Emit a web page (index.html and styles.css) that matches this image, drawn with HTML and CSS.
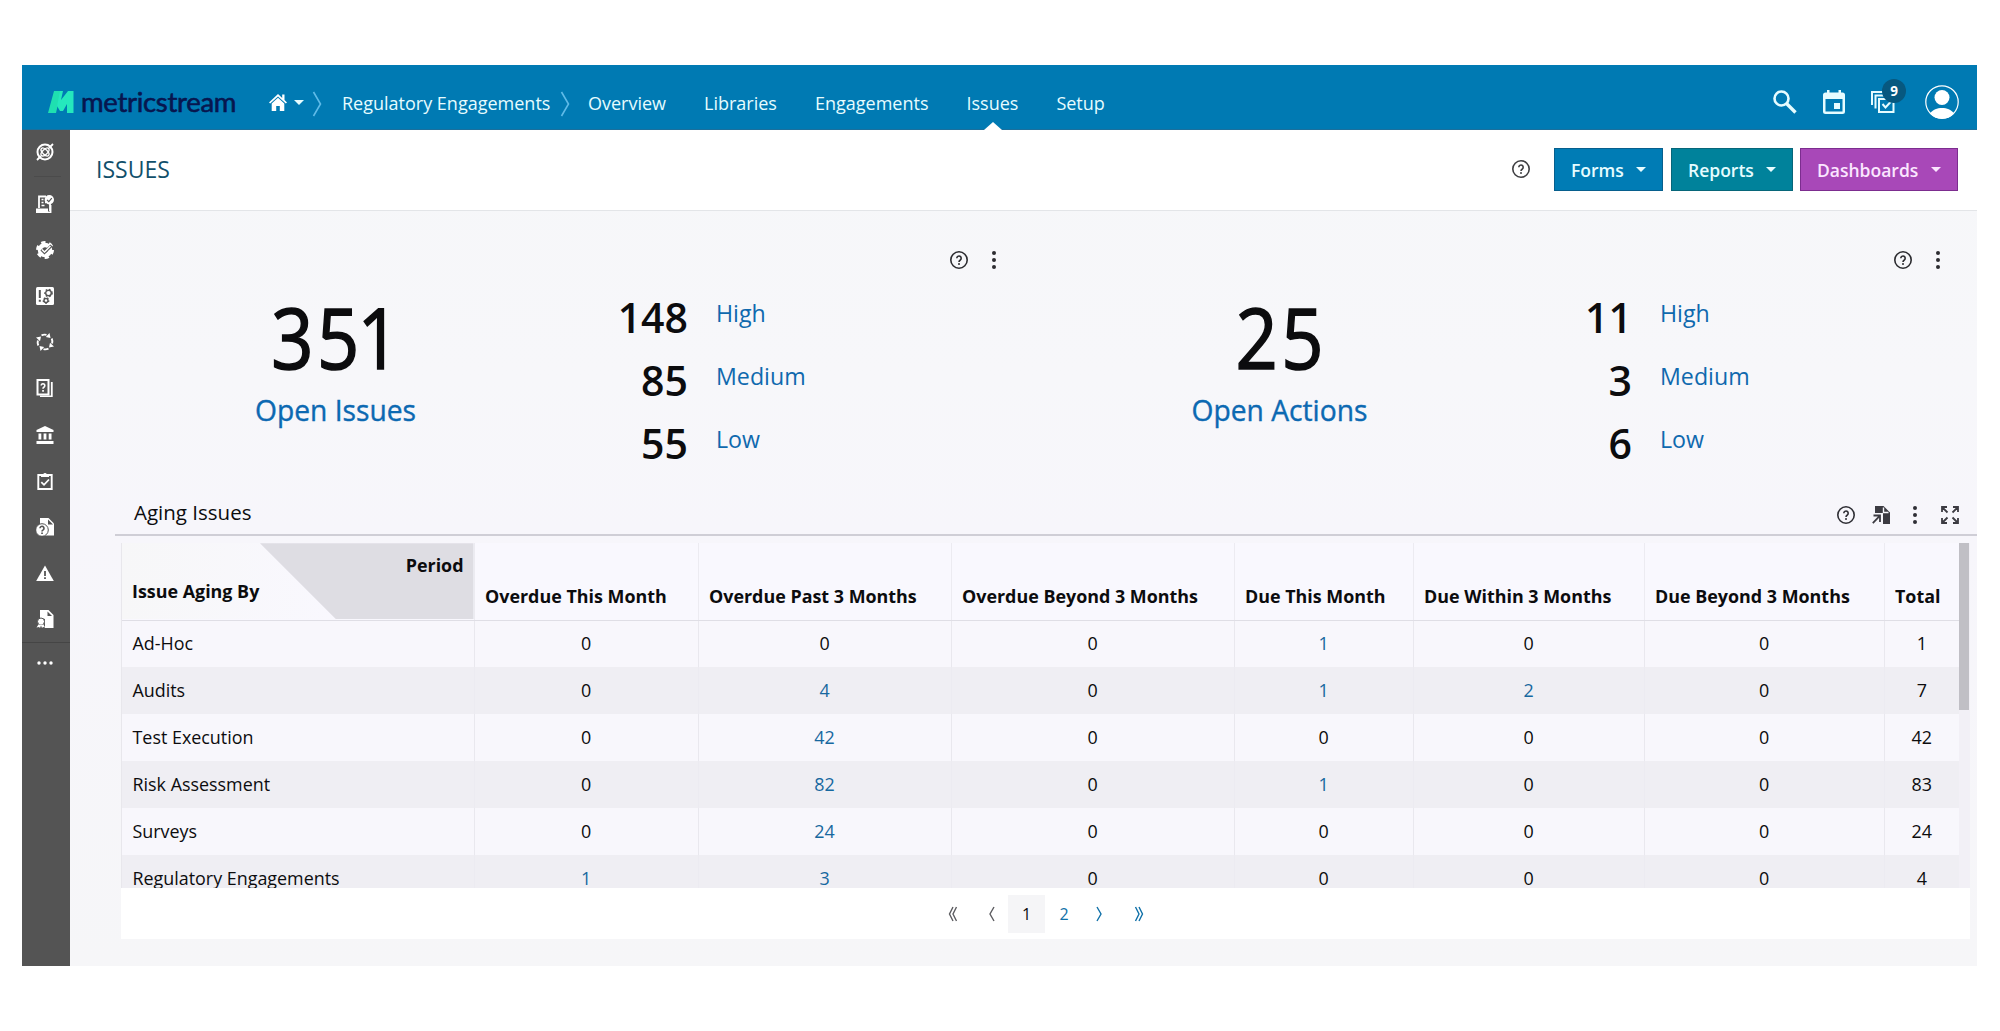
FILE: index.html
```html
<!DOCTYPE html>
<html lang="en">
<head>
  <meta charset="UTF-8">
  <meta name="viewport" content="width=device-width, initial-scale=1.0">
  <title>MetricStream - Issues</title>
  <link rel="stylesheet" href="styles.css">
</head>
<body>
  <!-- shared icons -->
  <svg class="sprite" width="0" height="0">
    <symbol id="help" viewBox="0 0 20 20">
      <circle cx="10" cy="10" r="8.2" fill="none" stroke="currentColor" stroke-width="1.6"/>
      <path d="M7.8 8.2a2.2 2.2 0 1 1 3.5 1.8c-.9.6-1.3 1-1.3 2" fill="none" stroke="currentColor" stroke-width="1.6"/>
      <circle cx="10" cy="14" r="1" fill="currentColor"/>
    </symbol>
    <symbol id="dots" viewBox="0 0 6 20">
      <circle cx="3" cy="3" r="2" fill="currentColor"/>
      <circle cx="3" cy="10" r="2" fill="currentColor"/>
      <circle cx="3" cy="17" r="2" fill="currentColor"/>
    </symbol>
    <symbol id="turn" viewBox="0 0 18 18">
      <path d="M5.5 2.300Q8 1.200 10.500 1.900" fill="none" stroke="#fff" stroke-width="1.900"/>
      <path d="M14.500 5L13.500 0 9.800 4z" fill="#fff"/>
    </symbol>
  </svg>

  <div class="app">
    <header class="topbar">
      <div class="logo">
        <svg width="26" height="22" viewBox="0 0 26 22">
          <path d="M6 0h7l-5 22H0z" fill="#1fe0b0"/>
          <path d="M12 0h3l-2 9 7-9h5.500v22h-6.500v-9l-4 7h-3l-3-5z" fill="#25e8bd"/>
        </svg>
        <span>metricstream</span>
      </div>
      <a class="home">
        <svg width="18" height="18" viewBox="0 0 18 18" fill="#fff"><path d="M9 1L0 9.400l1.200 1.200L9 3.500l7.800 7.100L18 9.400l-2.500-2.300V1.500h-2.300v3.400z"/><path d="M9 4.800l-6.300 5.700V18h4.500v-5h3.600v5h4.500v-7.500z"/></svg>
        <i class="caret"></i>
      </a>
      <svg class="sep" width="10" height="26" viewBox="0 0 10 26"><path d="M1.500 1l7 12-7 12" fill="none" stroke="#5fbbe8" stroke-width="1.600"/></svg>
      <a class="crumb">Regulatory Engagements</a>
      <svg class="sep" width="10" height="26" viewBox="0 0 10 26"><path d="M1.500 1l7 12-7 12" fill="none" stroke="#5fbbe8" stroke-width="1.600"/></svg>
      <nav class="menu">
        <a>Overview</a>
        <a>Libraries</a>
        <a>Engagements</a>
        <a class="active">Issues</a>
        <a>Setup</a>
      </nav>
      <div class="tools">
        <svg width="24" height="24" viewBox="0 0 24 24" fill="none" stroke="#e6fcff"><circle cx="8.500" cy="8.500" r="7" stroke-width="2.600"/><path d="M13.500 13.500l9 9" stroke-width="3.400"/></svg>
        <svg width="22" height="24" viewBox="0 0 22 24"><path fill="#e6fcff" fill-rule="evenodd" d="M4 0h2.500v2.500h9V0H18v2.500h1.500A2.500 2.500 0 0 1 22 5v16.500a2.500 2.500 0 0 1-2.500 2.500h-17A2.500 2.500 0 0 1 0 21.500V5a2.500 2.500 0 0 1 2.500-2.500H4zM2.500 9v12.500h17V9z"/><path fill="#e6fcff" d="M11 13h6v6h-6z"/></svg>
        <div class="tasks">
          <svg width="24" height="22" viewBox="0 0 24 22" fill="none" stroke="#e6fcff" stroke-width="2"><path d="M1 14V1h14M4.500 17.500V4.500H18"/><path d="M8 21V8h14.500v13z"/><path d="M11.500 13l3 3.500 5.500-6"/></svg>
          <b class="badge">9</b>
        </div>
        <svg width="34" height="34" viewBox="0 0 34 34"><circle cx="17" cy="17" r="16.200" fill="none" stroke="#fff" stroke-width="1.200"/><circle cx="17" cy="12.500" r="7.500" fill="#fff"/><path d="M5 28.500c3-4 7-5.500 12-5.500s9 1.500 12 5.500A17 17 0 0 1 17 34 17 17 0 0 1 5 28.500z" fill="#fff"/></svg>
      </div>
    </header>

    <div class="body">
      <aside class="sidebar">
        <a class="first"><svg viewBox="0 0 18 18" fill="none" stroke="#fff"><circle cx="9" cy="9" r="7.500" stroke-width="2"/><ellipse cx="9" cy="9" rx="5" ry="2.500" transform="rotate(45 9 9)" stroke-width="1.300"/><ellipse cx="9" cy="9" rx="5" ry="2.500" transform="rotate(-45 9 9)" stroke-width="1.300"/><path d="M1 17l4-4M13 5l4-4" stroke-width="1.800"/></svg></a>
        <a><svg viewBox="0 0 18 18"><path d="M3 13V1.500h7M14 9v7" fill="none" stroke="#fff" stroke-width="1.800"/><path d="M0 13.500h12V18H0z" fill="#fff"/><path d="M5.500 4.500h2M5.500 7.500h2M5.500 10.500h3M9 7.500h1" stroke="#fff" stroke-width="1.500"/><path d="M11.500 17.200h3.200V10" stroke="#fff" stroke-width="1.500" fill="none"/><circle cx="13.300" cy="4.700" r="4.700" fill="#fff"/><path d="M11 4.800l1.800 1.800 3-3.400" fill="none" stroke="#545454" stroke-width="1.200"/></svg></a>
        <a><svg viewBox="0 0 18 18"><circle cx="9" cy="9" r="5" fill="none" stroke="#fff" stroke-width="4.500"/><circle cx="9" cy="9" r="7.600" fill="none" stroke="#fff" stroke-width="2.800" stroke-dasharray="4.200 3.760"/><path d="M5.500 8.500l3 3 7-7" fill="none" stroke="#545454" stroke-width="3"/><path d="M6 8.500l2.500 2.500 6-6" fill="none" stroke="#fff" stroke-width="1.500"/></svg></a>
        <a><svg viewBox="0 0 18 18"><rect width="18" height="18" rx="1.500" fill="#fff"/><path d="M2.800 3h2v8h-2zM2.800 12.800h2v2h-2z" fill="#545454"/><g fill="none" stroke="#545454" stroke-width="1.400"><circle cx="12.500" cy="6" r="2.800"/><circle cx="10" cy="13.500" r="2"/></g><g fill="none" stroke="#545454" stroke-width="1.300" stroke-dasharray="1.500 2"><circle cx="12.500" cy="6" r="3.700"/><circle cx="10" cy="13.500" r="2.800"/></g></svg></a>
        <a><svg viewBox="0 0 18 18"><use href="#turn"/><use href="#turn" transform="rotate(90 9 9)"/><use href="#turn" transform="rotate(180 9 9)"/><use href="#turn" transform="rotate(270 9 9)"/></svg></a>
        <a><svg viewBox="0 0 18 18"><path d="M1.500 1h11v14.500h-11z" fill="none" stroke="#fff" stroke-width="2"/><path d="M15.800 3v14.500H4" fill="none" stroke="#fff" stroke-width="1.800"/><path d="M5.200 6.500a1.800 1.800 0 1 1 2.900 1.500c-.8.500-1.100.9-1.100 1.700" fill="none" stroke="#fff" stroke-width="1.600"/><path d="M6.200 11h1.700v1.700H6.200z" fill="#fff"/></svg></a>
        <a><svg viewBox="0 0 18 18" fill="#fff"><path d="M9 0l8.500 4v2H.5V4zM2.500 7.500h2.800v6H2.500zM7.600 7.500h2.800v6H7.600zM12.700 7.500h2.800v6h-2.800zM.5 15h17v3H.5z"/></svg></a>
        <a><svg viewBox="0 0 18 18"><path d="M2.300 3h13.400v14H2.300z" fill="none" stroke="#fff" stroke-width="1.900"/><path d="M5 2.200h2.200a1.900 1.900 0 0 1 3.600 0H13V5H5z" fill="#fff"/><path d="M5.300 10.200l2.700 2.600 5-5.300" fill="none" stroke="#fff" stroke-width="1.800"/></svg></a>
        <a><svg viewBox="0 0 18 18"><path d="M4 0h8.500L18 5.500V17.500H4z" fill="#fff"/><path d="M12 1.500v5h5z" fill="#545454"/><circle cx="6" cy="12" r="6.300" fill="#fff" stroke="#545454" stroke-width="1"/><path d="M4 10.300a2 2 0 1 1 3.200 1.600c-.8.500-1.200.8-1.200 1.600" fill="none" stroke="#545454" stroke-width="1.600"/><path d="M5.200 14.400h1.700V16H5.200z" fill="#545454"/></svg></a>
        <a><svg viewBox="0 0 18 18"><path d="M9 1.500l8.800 15.500H.2z" fill="#fff"/><path d="M8.100 7h1.800v5H8.100zM8.100 13.200h1.800V15H8.100z" fill="#545454"/></svg></a>
        <a><svg viewBox="0 0 18 18"><path d="M4 0h8.500L17.500 5V18H9V9L4 8z" fill="#fff"/><path d="M11.500 1.500V6H16z" fill="#545454"/><circle cx="5" cy="11.500" r="3.500" fill="#fff" stroke="#545454" stroke-width="1"/><path d="M2.500 14.500L.5 17.500l2.500-.5 1 1 1-2.500 1 2.500 1-1 2 .5-1.500-3z" fill="#fff"/></svg></a>
        <a class="more"><svg viewBox="0 0 18 18" fill="#fff"><circle cx="3" cy="9" r="1.700"/><circle cx="9" cy="9" r="1.700"/><circle cx="15" cy="9" r="1.700"/></svg></a>
      </aside>

      <main class="main">
        <div class="pagebar">
          <h1>ISSUES</h1>
          <svg class="help" width="20" height="20"><use href="#help"/></svg>
          <button class="btn forms">Forms<i class="caret"></i></button>
          <button class="btn reports">Reports<i class="caret"></i></button>
          <button class="btn dashboards">Dashboards<i class="caret"></i></button>
        </div>

        <div class="stats">
          <section class="stat">
            <div class="stat-total">
              <div class="big">3<span class="tight">5</span>1</div>
              <a>Open Issues</a>
            </div>
            <dl class="levels">
              <dt>148</dt><dd>High</dd>
              <dt>85</dt><dd>Medium</dd>
              <dt>55</dt><dd>Low</dd>
            </dl>
            <div class="stat-tools">
              <svg width="20" height="20"><use href="#help"/></svg>
              <svg width="6" height="20"><use href="#dots"/></svg>
            </div>
          </section>
          <section class="stat">
            <div class="stat-total">
              <div class="big">25</div>
              <a>Open Actions</a>
            </div>
            <dl class="levels">
              <dt>11</dt><dd>High</dd>
              <dt>3</dt><dd>Medium</dd>
              <dt>6</dt><dd>Low</dd>
            </dl>
            <div class="stat-tools">
              <svg width="20" height="20"><use href="#help"/></svg>
              <svg width="6" height="20"><use href="#dots"/></svg>
            </div>
          </section>
        </div>

        <section class="aging">
          <div class="aging-head">
            <h2>Aging Issues</h2>
            <svg width="20" height="20"><use href="#help"/></svg>
            <svg class="export" width="18" height="18" viewBox="0 0 18 18"><path d="M3 0h8.500L18 6.500V18h-7V7H3z" fill="#3c3b42"/><path d="M11.500 1.500v5h5" fill="none" stroke="#f7f7fc" stroke-width="1.400"/><path d="M.8 17.200l6.700-7M1.500 9.500H8V16" fill="none" stroke="#3c3b42" stroke-width="1.800"/></svg>
            <svg class="kebab" width="6" height="20"><use href="#dots"/></svg>
            <svg width="18" height="18" viewBox="0 0 18 18" fill="none" stroke="#3c3b42" stroke-width="1.800"><path d="M1 6V1h5M1 1l5.500 5.500M12 1h5v5M17 1l-5.500 5.500M1 12v5h5M1 17l5.500-5.500M17 12v5h-5M17 17l-5.500-5.500"/></svg>
          </div>
          <div class="table-box">
            <table>
              <colgroup>
                <col class="c-name"><col class="c-otm"><col class="c-op3"><col class="c-ob3"><col class="c-dtm"><col class="c-dw3"><col class="c-db3"><col class="c-total">
              </colgroup>
              <thead>
                <tr>
                  <th class="corner"><div><span class="by">Issue Aging By</span><span class="period">Period</span></div></th>
                  <th>Overdue This Month</th>
                  <th>Overdue Past 3 Months</th>
                  <th>Overdue Beyond 3 Months</th>
                  <th>Due This Month</th>
                  <th>Due Within 3 Months</th>
                  <th>Due Beyond 3 Months</th>
                  <th>Total</th>
                </tr>
              </thead>
              <tbody>
                <tr><td>Ad-Hoc</td><td>0</td><td>0</td><td>0</td><td><a>1</a></td><td>0</td><td>0</td><td>1</td></tr>
                <tr><td>Audits</td><td>0</td><td><a>4</a></td><td>0</td><td><a>1</a></td><td><a>2</a></td><td>0</td><td>7</td></tr>
                <tr><td>Test Execution</td><td>0</td><td><a>42</a></td><td>0</td><td>0</td><td>0</td><td>0</td><td>42</td></tr>
                <tr><td>Risk Assessment</td><td>0</td><td><a>82</a></td><td>0</td><td><a>1</a></td><td>0</td><td>0</td><td>83</td></tr>
                <tr><td>Surveys</td><td>0</td><td><a>24</a></td><td>0</td><td>0</td><td>0</td><td>0</td><td>24</td></tr>
                <tr><td>Regulatory Engagements</td><td><a>1</a></td><td><a>3</a></td><td>0</td><td>0</td><td>0</td><td>0</td><td>4</td></tr>
              </tbody>
            </table>
            <div class="scroll"><div class="thumb"></div></div>
          </div>
          <div class="pager">
            <svg class="off" width="10" height="16" viewBox="0 0 10 16"><path d="M5 1L1.500 8 5 15M8.500 1L5 8l3.500 7"/></svg>
            <svg class="off prev" width="8" height="16" viewBox="0 0 8 16"><path d="M6 1L2 8l4 7"/></svg>
            <span class="page current">1</span>
            <span class="page">2</span>
            <svg class="next" width="8" height="16" viewBox="0 0 8 16"><path d="M2 1l4 7-4 7"/></svg>
            <svg class="last" width="10" height="16" viewBox="0 0 10 16"><path d="M1.500 1L5 8l-3.500 7M5 1l3.500 7L5 15"/></svg>
          </div>
        </section>
      </main>
    </div>
  </div>
</body>
</html>
```
FILE: styles.css
```css
* {
  box-sizing: border-box;
  margin: 0;
  padding: 0;
}

body {
  background: #fff;
  font-family: "Open Sans", "Noto Sans", sans-serif;
  font-size: 17.9px;
  color: #0c0c0e;
  overflow: hidden;
}

svg {
  display: block;
  flex: none;
}

.sprite {
  position: absolute;
}

.app {
  width: 1955px;
  height: 901px;
  margin: 65px 0 0 22px;
  display: flex;
  flex-direction: column;
  overflow: hidden;
}

/* top bar */
.topbar {
  height: 65px;
  flex: none;
  display: flex;
  align-items: center;
  padding: 10px 18px 0 26px;
  background: #007ab3;
  border-bottom: 1px solid #1b6f9c;
  color: #e6fcff;
  font-size: 18px;
}

.logo {
  display: flex;
  align-items: center;
  width: 221px;
  gap: 7px;
}

.logo span {
  font-family: Lato, sans-serif;
  font-weight: 400;
  font-size: 27.5px;
  line-height: 24px;
  color: #07164f;
  letter-spacing: -.3px;
  -webkit-text-stroke: .6px #07164f;
}

.home {
  display: flex;
  align-items: center;
  width: 43px;
  gap: 7px;
}

.caret {
  display: block;
  border: 5px solid transparent;
  border-top-color: currentColor;
  border-bottom: 0;
}

.sep {
  margin-top: 4px;
}

.crumb {
  width: 218px;
  margin-left: 20px;
  padding-top: 1px;
}

.menu {
  display: flex;
  align-self: stretch;
  gap: 38px;
  margin-left: 18px;
}

.menu a {
  display: flex;
  align-items: center;
  position: relative;
  padding-top: 1px;
}

.menu .active::after {
  content: "";
  position: absolute;
  left: 50%;
  bottom: -1px;
  margin-left: -8px;
  border: 9px solid transparent;
  border-bottom: 8px solid #fff;
  border-top: 0;
}

.tools {
  display: flex;
  align-items: center;
  margin-left: auto;
}

.tools > * {
  margin-left: 26px;
}

.tasks {
  position: relative;
}

.tools > svg:last-child {
  margin-left: 30px;
}

.badge {
  position: absolute;
  left: 11px;
  top: -12px;
  width: 24px;
  height: 24px;
  border-radius: 50%;
  background: #07587f;
  color: #fff;
  font-size: 13.5px;
  line-height: 24px;
  text-align: center;
}

.body {
  flex: 1;
  min-height: 0;
  display: flex;
}

/* left icon rail */
.sidebar {
  width: 48px;
  flex: none;
  background: #545454;
}

.sidebar a {
  height: 46.1px;
  display: flex;
  align-items: center;
  justify-content: center;
  padding-right: 3px;
}

.sidebar svg {
  width: 18px;
  height: 18px;
}

.sidebar .first {
  height: 47px;
  margin: 0 9px 4px 12px;
  padding: 0 6px 3px 0;
  border-bottom: 1px solid #4b4b4b;
}

.sidebar .more {
  height: 42px;
  border-top: 1px solid #454545;
}

.main {
  flex: 1;
  background: linear-gradient(#f6f7f9, #f7f7fa 250px, #f7f6fb 400px, #f6f6f8);
}

.pagebar {
  height: 81px;
  display: flex;
  align-items: center;
  padding: 0 19px 1px 26px;
  background: #fff;
  border-bottom: 1px solid #e3e5e8;
}

.pagebar h1 {
  padding-bottom: 2px;
  font-size: 23px;
  font-weight: 400;
  color: #11506b;
}

.pagebar .help {
  margin: 0 23px 2px auto;
  color: #3f3f42;
}

.btn {
  height: 43px;
  display: flex;
  align-items: center;
  justify-content: space-between;
  padding: 0 16px;
  font: 600 17.5px "Open Sans", sans-serif;
  color: #e6fcff;
}

.forms {
  width: 109px;
  background: #007cb5;
  border: 1px solid #075f8d;
}

.reports {
  width: 122px;
  margin: 0 7px 0 8px;
  background: #00829b;
  border: 1px solid #076679;
}

.dashboards {
  width: 158px;
  background: #a848b8;
  border: 1px solid #7c2d8f;
  color: #fbe6ff;
}

/* stat panels */
.stats {
  display: grid;
  grid-template-columns: 944px 944px;
  height: 285px;
  padding-left: 19px;
}

.stat {
  display: flex;
}

.stat-total {
  width: 493px;
  padding-top: 80px;
  text-align: center;
}

/* figures and captions are set slightly condensed */
.stat-total .big {
  font-size: 84px;
  line-height: 92px;
  letter-spacing: 4px;
  text-indent: 4px;
  transform: scaleX(.88);
  -webkit-text-stroke: 1.6px #0c0c0e;
}

.stat-total .tight {
  letter-spacing: -2px;
}

.stat-total a {
  display: block;
  font-size: 30px;
  line-height: 54px;
  color: #0c69b2;
  transform: scaleX(.94);
  -webkit-text-stroke: .4px #0c69b2;
}

.levels {
  display: grid;
  grid-template-columns: 106px auto;
  grid-auto-rows: 63px;
  column-gap: 28px;
  align-self: start;
  padding-top: 75px;
}

.levels dt {
  font-size: 41px;
  line-height: 63px;
  font-weight: 600;
  text-align: right;
}

.levels dd {
  font-size: 23.2px;
  line-height: 54px;
  color: #0f69ae;
}

.stat-tools {
  display: flex;
  gap: 22px;
  margin-left: auto;
  padding: 39px 36px 0 0;
  color: #2c2c30;
}

/* aging table */
.aging-head {
  height: 40px;
  display: flex;
  align-items: center;
  margin-left: 45px;
  padding: 0 18px 0 19px;
  border-bottom: 2px solid #cfced6;
  color: #2f2f35;
}

.aging-head h2 {
  flex: 1;
  padding-bottom: 7px;
  font-size: 20.5px;
  font-weight: 400;
  color: #0c0c0e;
}

.aging-head .export {
  margin: 0 22px 0 16px;
}

.aging-head .kebab {
  margin-right: 23px;
}

.table-box {
  display: flex;
  height: 345px;
  margin: 7px 7px 0 51px;
  overflow: hidden;
  border-left: 1px solid #e8e7ec;
}

table {
  width: 1837px;
  flex: none;
  align-self: flex-start;
  table-layout: fixed;
  border-collapse: collapse;
}

.c-name { width: 352px; }
.c-otm { width: 224px; }
.c-op3 { width: 253px; }
.c-ob3 { width: 283px; }
.c-dtm { width: 179px; }
.c-dw3 { width: 231px; }
.c-db3 { width: 240px; }
.c-total { width: 75px; }

th {
  height: 77px;
  padding: 30px 0 0 10.5px;
  font-weight: 700;
  text-align: left;
  white-space: nowrap;
  background: #f9f8fe;
  border-right: 1px solid #ecebf1;
  border-bottom: 1px solid #dfdee5;
}

.corner {
  padding: 0;
}

.corner div {
  height: 76px;
  display: flex;
  justify-content: space-between;
  padding: 10px 10px 0;
  background: linear-gradient(90deg, #f7f7f8, #f9f8fe 60%);
  position: relative;
}

.corner div::before {
  content: "";
  position: absolute;
  inset: 0 0 0 138px;
  background: #dedde3;
  clip-path: polygon(0 0, 100% 0, 100% 100%, 76px 100%);
}

.corner span {
  position: relative;
}

.corner .by {
  padding-top: 26px;
}

td {
  height: 47px;
  padding-bottom: 1px;
  text-align: center;
  border-right: 1px solid #e9e8ee;
}

td:first-child {
  text-align: left;
  padding-left: 10.5px;
}

td a {
  color: #17689f;
}

th:last-child,
td:last-child {
  border-right: 0;
}

tbody tr {
  background: #f8f7fc;
}

tbody tr:nth-child(even) {
  background: #efeef3;
}

tbody tr:nth-child(even) td {
  border-right-color: #ecebf1;
}

.scroll {
  flex: 1;
  background: #f2f0f6;
}

.thumb {
  width: 10px;
  height: 167px;
  background: #c0bfc5;
}

.pager {
  height: 51px;
  margin: 0 7px 0 51px;
  display: flex;
  align-items: center;
  padding-left: 827px;
  background: #fff;
  font-size: 16px;
}

.pager path {
  fill: none;
  stroke: #0f70a8;
  stroke-width: 1.4;
}

.pager .off path {
  stroke: #5c5c60;
}

.pager .prev {
  margin: 0 12px 0 30px;
}

.page {
  width: 38px;
  height: 38px;
  line-height: 38px;
  text-align: center;
  color: #0f70a8;
}

.page.current {
  width: 37px;
  background: #f5f5f7;
  color: #0c0c0e;
}

.pager .next {
  margin: 0 31px 0 12px;
}
```
